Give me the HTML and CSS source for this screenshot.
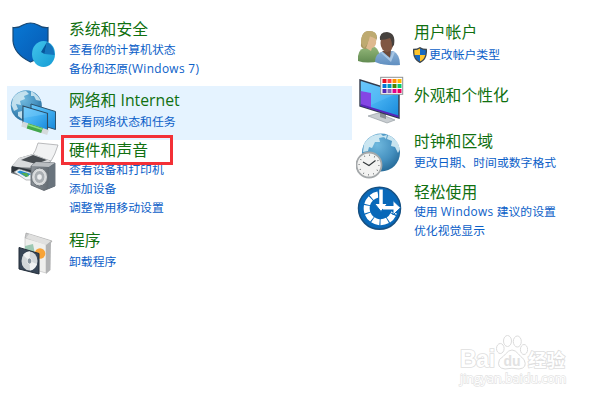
FILE: index.html
```html
<!DOCTYPE html>
<html lang="zh-CN">
<head>
    <meta charset="UTF-8">
    <meta name="viewport" content="width=device-width, initial-scale=1.0">
    <title>控制面板</title>
    <link rel="stylesheet" href="styles.css">
</head>
<body>
    <div class="panel">
        <div class="column left">
            <div class="item security">
                <svg class="icon" viewBox="0 0 50 50">
                    <defs>
                        <linearGradient id="shieldBlue" x1="0" y1="0" x2="1" y2="1"><stop offset="0" stop-color="#0878d4"/><stop offset="1" stop-color="#0759b2"/></linearGradient>
                        <linearGradient id="pieBlue" x1="0" y1="0" x2="1" y2="1"><stop offset="0" stop-color="#42c5ec"/><stop offset="1" stop-color="#159bd4"/></linearGradient>
                    </defs>
                    <path d="M4 6.500Q10 7 14 4Q21.500 0 29 4Q33 7 39 6.500V20Q38 34 21.500 41Q5 33 4 20Z" fill="url(#shieldBlue)" stroke="#174875" stroke-width="1.200"/>
                    <ellipse cx="34.500" cy="33" rx="11.500" ry="13" fill="url(#pieBlue)"/>
                    <path d="M35.500 33L38 21Q45 24 45.500 34Z" fill="#1575bd"/>
                    <path d="M35.500 33L32 31L38 21Z" fill="#08569b"/>
                </svg>
                <div class="text">
                    <h2>系统和安全</h2>
                    <a>查看你的计算机状态</a>
                    <a>备份和还原<span class="latin">(Windows 7)</span></a>
                </div>
            </div>
            <div class="item network">
                <svg class="icon" viewBox="0 0 50 50">
                    <defs>
                        <radialGradient id="globe" cx=".4" cy=".3" r=".75"><stop offset="0" stop-color="#70b9de"/><stop offset=".6" stop-color="#4590bf"/><stop offset="1" stop-color="#246896"/></radialGradient>
                        <linearGradient id="screen" x1="0" y1="0" x2="1" y2="1"><stop offset="0" stop-color="#69c7fa"/><stop offset=".5" stop-color="#43aff0"/><stop offset="1" stop-color="#1688da"/></linearGradient>
                    </defs>
                    <circle cx="17.300" cy="17.700" r="15.500" fill="url(#globe)"/>
                    <path d="M4 10Q9 3 17 3L20 6L15 8L16 11L11 13L12 17L7 16L9 21L5 23L2.500 17ZM22 3Q29 7 32 13L27 12L25 8L22 8ZM9 24L13 23V31L9 28Z" fill="#d5ebf3" opacity=".85"/>
                    <path d="M22 16L46.500 23.500V41.500L22 34Z" fill="url(#screen)" stroke="#2d526c" stroke-width="1"/>
                    <path d="M14 18L38.500 25.300V42.500L14 35Z" fill="url(#screen)" stroke="#2f4a5f" stroke-width="1.100"/>
                    <path d="M14.700 19L38 26L14.700 30Z" fill="#94dcff" opacity=".3"/>
                    <path d="M13 36L39 44.500" stroke="#d5dadc" stroke-width="5"/>
                    <path d="M18.500 37.800L33 42.500" stroke="#41a74c" stroke-width="5.500"/>
                    <path d="M19 36.700L33 41.200" stroke="#8ade80" stroke-width="1.500"/>
                </svg>
                <div class="text">
                    <h2>网络和 Internet</h2>
                    <a>查看网络状态和任务</a>
                </div>
            </div>
            <div class="item hardware">
                <svg class="icon" viewBox="0 0 50 50">
                    <defs>
                        <linearGradient id="speaker"><stop offset="0" stop-color="#8c9298"/><stop offset="1" stop-color="#555e66"/></linearGradient>
                    </defs>
                    <path d="M23 14Q27 9 29 1L49 3Q46 13 42 19Z" fill="#f1f2f3" stroke="#a9abad" stroke-width=".8"/>
                    <path d="M2 25L10 16L24 12L42 19L35 28L23 38L2 31Z" fill="#6f7479"/>
                    <path d="M2 25L10 16L24 12L42 19L32 26Z" fill="#d9dbdd"/>
                    <path d="M12 18L24 13L38 18L27 22Z" fill="#484d52"/>
                    <path d="M3 24L22 28V36L3 30Z" fill="#2e353b"/>
                    <path d="M5 30L10 27L23 31V38L17 38Z" fill="#eef2f4" stroke="#8d9296" stroke-width=".6"/>
                    <path d="M8 30L11 28.500L22 32L17 35Z" fill="#258bd0"/>
                    <path d="M12 31L18 31L20 34L17 35Z" fill="#53ac52"/>
                    <path d="M22 24L27 20L46 21V44L35 48.500L22 43Z" fill="url(#speaker)" stroke="#596067" stroke-width=".8"/>
                    <path d="M22 24L27 20L46 21L40 25Z" fill="#b9bdc1"/>
                    <path d="M40 25L46 21V44L39 47Z" fill="#69737c"/>
                    <ellipse cx="30.500" cy="35" rx="8" ry="9" fill="#d3d6d8" stroke="#6b7278"/>
                    <ellipse cx="30.500" cy="35" rx="5.500" ry="6.500" fill="#a9aeb2" stroke="#eee" stroke-width=".8"/>
                    <ellipse cx="30.500" cy="35" rx="2.300" ry="2.800" fill="#eceeef"/>
                </svg>
                <div class="text">
                    <h2>硬件和声音</h2>
                    <a>查看设备和打印机</a>
                    <a>添加设备</a>
                    <a>调整常用移动设置</a>
                </div>
                <div class="mark"></div>
            </div>
            <div class="item programs">
                <svg class="icon" viewBox="0 0 50 50">
                    <path d="M17 3L43 11L40 15L16 8Z" fill="#c6c7c8" stroke="#999" stroke-width=".6"/>
                    <path d="M16 8L37 14V43L16 37Z" fill="#efefed" stroke="#bbb" stroke-width=".6"/>
                    <path d="M37 14L42 11L41.500 40L37 44Z" fill="#b1b2b3"/>
                    <path d="M20 4L42 11L37 15L17 8Z" fill="#e0e0df"/>
                    <path d="M16 16L24 14L26 24L16 23Z" fill="#9dc8b3"/>
                    <circle cx="31" cy="23.500" r="5.300" fill="#f7a337"/>
                    <path d="M10 17.500L30 23.500V44L10 39Z" fill="#384657" stroke="#222d39"/>
                    <ellipse cx="20.500" cy="31" rx="8" ry="9.500" fill="#d2d7da"/>
                    <path d="M20.500 31L14 25Q17 21 21 21.500ZM20.500 31L28 34Q25 40 21 40.500Z" fill="#f0f2f3"/>
                    <ellipse cx="20.500" cy="31" rx="2.300" ry="3" fill="#8996a0" stroke="#fff" stroke-width=".7"/>
                </svg>
                <div class="text">
                    <h2>程序</h2>
                    <a>卸载程序</a>
                </div>
            </div>
        </div>
        <div class="column right">
            <div class="item users">
                <svg class="icon" viewBox="0 0 50 50">
                    <defs>
                        <linearGradient id="green" x1="0" y1="0" x2="0" y2="1"><stop offset="0" stop-color="#92b679"/><stop offset="1" stop-color="#628b51"/></linearGradient>
                        <linearGradient id="shirt" x1="0" y1="0" x2="0" y2="1"><stop offset="0" stop-color="#89afd5"/><stop offset="1" stop-color="#608fc1"/></linearGradient>
                    </defs>
                    <path d="M2 37Q1 26 8 24L19 23Q24 26 24 37Q11 40 2 37Z" fill="url(#green)"/>
                    <path d="M5 20Q5 7 13 7Q21 7 21 14L18 23L9 25Q4 24 5 20Z" fill="#a99761"/>
                    <path d="M13 12Q20 13 20 15Q21 23 16 24L15 27L10 24Q12 20 13 12Z" fill="#deb98f"/>
                    <path d="M5 19Q5 7 13 7Q22 7 20 15L14 12Q12 21 8 24Z" fill="#beaa70"/>
                    <path d="M19 38Q19 29 28 27L37 27Q44 30 44 41Q29 42 19 38Z" fill="url(#shirt)"/>
                    <path d="M26 27L35 26L34 34Z" fill="#6d4938"/>
                    <ellipse cx="31" cy="19" rx="6.500" ry="9" fill="#805743"/>
                    <path d="M24 16Q23 8 31 8Q40 9 38 21L36 23Q36 17 34 14Q29 16 24 16Z" fill="#46413e"/>
                    <path d="M26 28L34 34L37 27L39 28L35 38L25 29Z" fill="#a6c5e3"/>
                </svg>
                <div class="text">
                    <h2>用户帐户</h2>
                    <a class="with-shield"><svg class="shield" viewBox="0 0 14 16">
                        <path d="M7 .7Q9.500 2.500 13.300 2.500Q14 12 7 15.300Q0 12 .7 2.500Q4.500 2.500 7 .7Z" fill="#1769c2"/>
                        <path d="M7 1V8H1Q.6 5 1 2.700Q4.500 2.700 7 1ZM7 8H13Q12 12.500 7 15Z" fill="#ffc52c"/>
                        <path d="M7 .7Q9.500 2.500 13.300 2.500Q14 12 7 15.300Q0 12 .7 2.500Q4.500 2.500 7 .7Z" fill="none" stroke="#3e464c" stroke-width="1.300"/>
                    </svg>更改帐户类型</a>
                </div>
            </div>
            <div class="item appearance">
                <svg class="icon" viewBox="0 0 50 50">
                    <path d="M12 41L22 38L39 45L31 48Z" fill="#c8cdd1" stroke="#8b9399" stroke-width=".6"/>
                    <path d="M24 37L30 39V44L24 42Z" fill="#899096"/>
                    <path d="M4 5L43 17V43L4 31Z" fill="url(#screen)" stroke="#333b4c" stroke-width="1.400"/>
                    <path d="M4.700 16L15 18V34L4.700 30Z" fill="#8446e4"/>
                    <path d="M4.700 29L42.500 40.500V42.500L4.700 31Z" fill="#5626ba"/>
                    <path d="M5 6L42 18L15 30V18L5 16Z" fill="#70cbff" opacity=".3"/>
                    <rect x="24.700" y="2.300" width="22" height="17" fill="#fff" stroke="#8d9295"/>
                    <path d="M26.500 4h4v4h-4z" fill="#e81123"/>
                    <path d="M31.500 4h4v4h-4z" fill="#ff4343"/>
                    <path d="M36.500 4h4v4h-4z" fill="#ff8c00"/>
                    <path d="M41.500 4h4v4h-4z" fill="#ffb900"/>
                    <path d="M26.500 9h4v4h-4z" fill="#0078d7"/>
                    <path d="M31.500 9h4v4h-4z" fill="#0099bc"/>
                    <path d="M36.500 9h4v4h-4z" fill="#498205"/>
                    <path d="M41.500 9h4v4h-4z" fill="#00cc6a"/>
                    <path d="M26.500 14h4v4h-4z" fill="#5527b5"/>
                    <path d="M31.500 14h4v4h-4z" fill="#8764b8"/>
                    <path d="M36.500 14h4v4h-4z" fill="#e3008c"/>
                    <path d="M41.500 14h4v4h-4z" fill="#ea005e"/>
                </svg>
                <div class="text">
                    <h2>外观和个性化</h2>
                </div>
            </div>
            <div class="item clock">
                <svg class="icon" viewBox="0 0 50 50">
                    <circle cx="25" cy="21.500" r="19" fill="url(#globe)"/>
                    <path d="M8 13Q14 3 25 3L28 6L23 7L24 11L19 11L16 17L13 16L12 20L7 21ZM32 4Q42 8 44 18L42 22L39 16L35 15L36 10L31 8ZM27 5L31 4L30 8Z" fill="#d7edf5" opacity=".9"/>
                    <circle cx="13" cy="34" r="12.500" fill="#f3f3f2" stroke="#a4a8aa" stroke-width="1.800"/>
                    <circle cx="13" cy="34" r="9.800" fill="none" stroke="#5d6265" stroke-width="1.500" stroke-dasharray=".7 4.430"/>
                    <path d="M7 31L13 34.500L19.500 29.500" fill="none" stroke="#33383b" stroke-width="1.100"/>
                </svg>
                <div class="text">
                    <h2>时钟和区域</h2>
                    <a>更改日期、时间或数字格式</a>
                </div>
            </div>
            <div class="item ease">
                <svg class="icon" viewBox="0 0 50 50">
                    <circle cx="23.500" cy="24.300" r="21" fill="#0868b9" stroke="#165082" stroke-width="1.500"/>
                    <path d="M22 10.500A14 14 0 1 0 38 28.500" fill="none" stroke="#fff" stroke-width="6" stroke-dasharray="7.200 1"/>
                    <path d="M25 5V26M27 23.700H40" fill="none" stroke="#0868b9" stroke-width="5.500"/>
                    <path d="M18.500 19.500H31.500L25 27.500ZM37 16.500L44.500 23.700L37 31Z" fill="#fff" stroke="#0868b9"/>
                    <path d="M25 5.500V22M27 23.700H39" fill="none" stroke="#fff" stroke-width="3.500"/>
                </svg>
                <div class="text">
                    <h2>轻松使用</h2>
                    <a>使用 <span class="latin">Windows</span> 建议的设置</a>
                    <a>优化视觉显示</a>
                </div>
            </div>
        </div>
    </div>
    <div class="watermark">
        <div class="brand">
            <span class="bai">Bai</span>
            <svg class="paw" viewBox="0 0 32 36">
                <ellipse cx="4.300" cy="14.500" rx="3.800" ry="5"/>
                <ellipse cx="11.500" cy="7" rx="4" ry="5.500"/>
                <ellipse cx="21.300" cy="7.500" rx="4" ry="5.500"/>
                <ellipse cx="28" cy="15.500" rx="3.600" ry="5"/>
                <path d="M9.500 20Q16 12 22.500 20Q24 22 28 25.500Q32 34 23 35Q16 33.500 9 35Q0 34 3.500 25.500Q8 22 9.500 20Z"/>
                <text x="16" y="32" text-anchor="middle">du</text>
            </svg>
            <span class="jing">经验</span>
        </div>
        <div class="url">jingyan.baidu.com</div>
    </div>
</body>
</html>
```
FILE: styles.css
```css
body{
    margin: 0;
    width: 600px; height: 400px;
    overflow: hidden;
    background-color: #fff;
    font-family: "Open Sans", "Noto Sans CJK SC", sans-serif;
}
.panel{
    display: flex;
    padding-left: 7px;
}
.left{
    width: 345px;
    padding-top: 15px;
}
.right{
    padding: 18px 0 0 4px;
}
.item{
    display: flex;
    box-sizing: border-box;
    padding: 4px 0 0 2px;
}
.left .item{
    gap: 10px;
}
.right .item{
    padding-left: 0;
    gap: 8px;
}
.icon{
    width: 50px; height: 50px;
    flex: none;
}
.text{
    white-space: nowrap;
}
h2{
    margin: 0;
    font-size: 15.8px; font-weight: normal;
    line-height: 21px;
    color: #107010;
}
a{
    display: block;
    font-size: 11.85px;
    line-height: 19px;
    color: #0b60c8;
}
.latin{
    letter-spacing: .35px;
}
.security{
    height: 71px;
}
.security .icon{
    margin-top: 2px;
}
.network{
    height: 54px;
    background-color: #e5f3ff;
}
.network .icon{
    margin-top: -2px;
}
.network h2, .programs h2, .users h2, .clock h2{
    margin-bottom: 1px;
}
.users h2{
    margin-bottom: 2px;
}
.hardware{
    position: relative;
    height: 86px;
    padding-top: 0;
}
.hardware .icon{
    margin-top: 2px;
}
.hardware h2, .ease h2{
    margin-bottom: -1px;
}
.mark{
    position: absolute;
    left: 54px; top: -5px;
    box-sizing: border-box;
    width: 112px; height: 30px;
    border: 3px solid #f33036;
}
.programs .icon{
    margin-top: 0;
}
.users{
    height: 57px;
}
.users .icon{
    margin-top: 2px;
}
.with-shield{
    display: flex;
    align-items: center;
    gap: 2px;
    margin-left: -1px;
}
.shield{
    width: 14px; height: 16px;
}
.appearance{
    height: 56px;
    padding-top: 0;
}
.appearance h2{
    margin-top: 10px;
}
.clock{
    height: 51px;
    padding-top: 0;
}
.ease{
    padding-top: 0;
}
.ease .icon{
    margin-top: 2px;
}
.watermark{
    position: absolute;
    left: 460px; top: 334px;
    color: #fff;
    -webkit-text-stroke: 1.6px #dedede;
    paint-order: stroke fill;
    white-space: nowrap;
}
.brand{
    display: flex;
    align-items: flex-end;
    height: 36px;
}
.bai{
    width: 36px;
    font: bold 23px/22px "Liberation Sans", sans-serif;
    letter-spacing: -.3px;
}
.paw{
    width: 32px; height: 36px;
    fill: #fff;
    stroke: #dcdcdc;
    stroke-width: 1;
    paint-order: normal;
}
.paw text{
    font: bold 14px "Liberation Sans", sans-serif;
    fill: #e2e2e2;
    stroke: none;
    -webkit-text-stroke: 0;
}
.jing{
    font-size: 18.5px; font-weight: bold;
    line-height: 20px;
}
.url{
    margin-top: 1px;
    font: 12.5px/16px "Open Sans", sans-serif;
    -webkit-text-stroke: 1.3px #e2e2e2;
}
```
